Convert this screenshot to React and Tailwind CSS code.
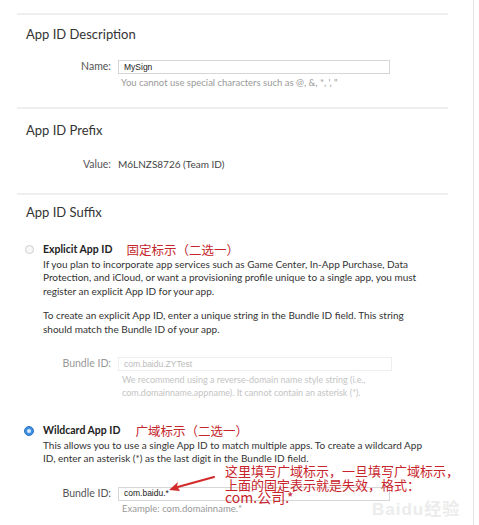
// App ID form with wildcard annotation (screenshot recreation)

const labelCls = "w-[95px] shrink-0 text-right pr-[1px] text-[10.5px] text-[#555]"
const hintCls = "text-[9.5px] leading-[13px] text-[#999]"

const Radio = ({ checked }) =>
  checked ? (
    <span className="w-[10px] h-[10px] rounded-full bg-[#3f8fe0] border border-[#2f74c4] flex items-center justify-center shrink-0">
      <span className="w-[4px] h-[4px] rounded-full bg-[#d8e9fb]"></span>
    </span>
  ) : (
    <span className="w-[9px] h-[9px] rounded-full bg-[#f7f7f7] border border-[#cfcfcf] shrink-0"></span>
  )

const App = () => {
  return (
    <div className="w-[479px] h-[525px] bg-white flex overflow-hidden font-['Lato','Noto_Sans_CJK_SC',sans-serif] text-[#333]">
      <div className="relative w-[474px] h-full border-r border-[#e3e3e3] pl-[17px] pt-[13px]">

        {/* App ID Description */}
        <div className="w-[431px] border-t-2 border-[#efefef] pt-[11px] pb-[18px]">
          <h2 className="pl-[9px] text-[13px] leading-[16px]">App ID Description</h2>
          <div className="flex items-center gap-[6px] mt-[17px]">
            <span className={labelCls}>Name:</span>
            <div className="w-[272px] h-[14px] border border-[#d6d6d6] flex items-center px-[5px] text-[8.5px] font-['Liberation_Sans',sans-serif] text-[#222]">
              MySign
            </div>
          </div>
          <p className={`${hintCls} ml-[104px] mt-[1px]`}>You cannot use special characters such as @, &amp;, *, ', "</p>
        </div>

        {/* App ID Prefix */}
        <div className="w-[431px] border-t-2 border-[#efefef] pt-[13px] pb-[20px]">
          <h2 className="pl-[9px] text-[13px] leading-[16px]">App ID Prefix</h2>
          <div className="flex items-center gap-[6px] mt-[19px]">
            <span className={labelCls}>Value:</span>
            <span className="text-[10px] text-[#444]">M6LNZS8726 (Team ID)</span>
          </div>
        </div>

        {/* App ID Suffix */}
        <div className="w-[431px] border-t-2 border-[#efefef] pt-[9px]">
          <h2 className="pl-[9px] text-[13px] leading-[16px]">App ID Suffix</h2>

          {/* Explicit */}
          <div className="flex items-center mt-[22px] pl-[8px]">
            <Radio />
            <span className="ml-[9px] text-[10.5px] font-bold text-[#222]">Explicit App ID</span>
            <span className="ml-[14px] text-[12.5px] leading-[16px] text-[#c3262c] font-['Noto_Sans_CJK_SC',sans-serif]">固定标示（二选一）</span>
          </div>
          <div className="pl-[26px] text-[10px] leading-[13.5px] text-[#333] whitespace-nowrap">
            <p className="mt-[0px]">If you plan to incorporate app services such as Game Center, In-App Purchase, Data<br />Protection, and iCloud, or want a provisioning profile unique to a single app, you must<br />register an explicit App ID for your app.</p>
            <p className="mt-[11px]">To create an explicit App ID, enter a unique string in the Bundle ID field. This string<br />should match the Bundle ID of your app.</p>
          </div>
          <div className="flex items-center gap-[6px] mt-[20px]">
            <span className={`${labelCls} text-[#999]`}>Bundle ID:</span>
            <div className="w-[274px] h-[14px] border border-[#eeeeee] flex items-center px-[5px] text-[8.5px] font-['Liberation_Sans',sans-serif] text-[#bbb]">
              com.baidu.ZYTest
            </div>
          </div>
          <p className="ml-[105px] mt-[1px] text-[9px] leading-[13px] text-[#c4c4c4] whitespace-nowrap">
            We recommend using a reverse-domain name style string (i.e.,<br />com.domainname.appname). It cannot contain an asterisk (*).
          </p>

          {/* Wildcard */}
          <div className="flex items-center mt-[24px] pl-[7px]">
            <Radio checked />
            <span className="ml-[9px] text-[10.5px] font-bold text-[#222]">Wildcard App ID</span>
            <span className="ml-[15px] text-[12.5px] leading-[16px] text-[#c3262c] font-['Noto_Sans_CJK_SC',sans-serif]">广域标示（二选一）</span>
          </div>
          <p className="pl-[26px] mt-[0px] text-[10px] leading-[13.5px] text-[#333] whitespace-nowrap">
            This allows you to use a single App ID to match multiple apps. To create a wildcard App<br />ID, enter an asterisk (*) as the last digit in the Bundle ID field.
          </p>
          <div className="flex items-center gap-[6px] mt-[20px]">
            <span className={labelCls}>Bundle ID:</span>
            <div className="w-[272px] h-[14px] border border-[#d6d6d6] flex items-center px-[5px] text-[8.5px] font-['Liberation_Sans',sans-serif] text-[#222]">
              com.baidu.*
            </div>
          </div>
          <p className={`${hintCls} ml-[105px] mt-[0px]`}>Example: com.domainname.*</p>
        </div>

        {/* Annotation arrow */}
        <svg className="absolute left-[160px] top-[470px]" width="60" height="26" viewBox="0 0 60 26">
          <path d="M54 7 L14 18" stroke="#d22a2a" strokeWidth="2.2" strokeLinecap="round" fill="none" />
          <path d="M9 20 L18 12 L17 16 L20 21 Z" fill="#d22a2a" />
        </svg>

        {/* Annotation text */}
        <div className="absolute left-[225px] top-[464px] text-[13px] leading-[13.5px] text-[#c8242b] whitespace-nowrap font-['Noto_Sans_CJK_SC',sans-serif]">
          <p>这里填写广域标示，一旦填写广域标示，</p>
          <p>上面的固定表示就是失效，格式：</p>
          <p className="text-[14px]">com.公司.*</p>
        </div>

        {/* Watermark */}
        <div className="absolute left-[372px] top-[497px] text-[17px] font-bold text-[#ececec] tracking-[1px] font-['Liberation_Sans','Noto_Sans_CJK_SC',sans-serif]">
          Baidu经验
        </div>
      </div>
    </div>
  )
}

export default App
